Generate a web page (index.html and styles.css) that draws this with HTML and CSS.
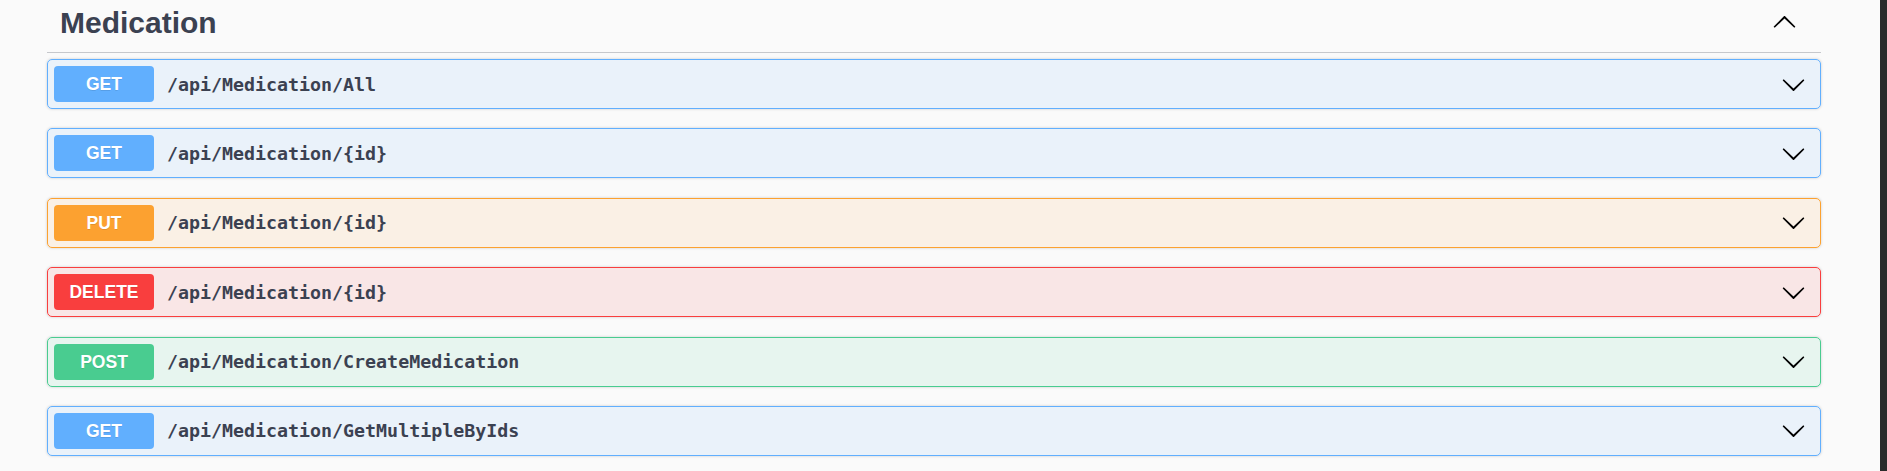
FILE: index.html
```html
<!DOCTYPE html>
<html>
<head>
<meta charset="utf-8">
<link rel="stylesheet" href="styles.css">
</head>
<body>
<div class="page">
  <main class="main">
    <section class="tag-section">
      <h3 class="tag-heading">
        <span class="tag-name">Medication</span>
        <svg class="arrow arrow-up" viewBox="0 0 20 20" width="25" height="25"><path d="M17.418 13.891c.272.268.709.268.979 0s.271-.701 0-.969l-7.908-7.83c-.27-.268-.707-.268-.979 0l-7.908 7.830c-.27.268-.27.701 0 .969.271.268.709.268.979 0L10 6.75l7.418 7.141z"/></svg>
      </h3>
      <div class="ops">
        <div class="opblock get">
          <span class="method">GET</span>
          <span class="path">/api/Medication/All</span>
          <svg class="arrow" viewBox="0 0 20 20" width="25" height="25"><path d="M17.418 6.109c.272-.268.709-.268.979 0s.271.701 0 .969l-7.908 7.83c-.27.268-.707.268-.979 0l-7.908-7.83c-.27-.268-.27-.701 0-.969.271-.268.709-.268.979 0L10 13.25l7.418-7.141z"/></svg>
        </div>
        <div class="opblock get">
          <span class="method">GET</span>
          <span class="path">/api/Medication/{id}</span>
          <svg class="arrow" viewBox="0 0 20 20" width="25" height="25"><path d="M17.418 6.109c.272-.268.709-.268.979 0s.271.701 0 .969l-7.908 7.83c-.27.268-.707.268-.979 0l-7.908-7.83c-.27-.268-.27-.701 0-.969.271-.268.709-.268.979 0L10 13.25l7.418-7.141z"/></svg>
        </div>
        <div class="opblock put">
          <span class="method">PUT</span>
          <span class="path">/api/Medication/{id}</span>
          <svg class="arrow" viewBox="0 0 20 20" width="25" height="25"><path d="M17.418 6.109c.272-.268.709-.268.979 0s.271.701 0 .969l-7.908 7.83c-.27.268-.707.268-.979 0l-7.908-7.83c-.27-.268-.27-.701 0-.969.271-.268.709-.268.979 0L10 13.25l7.418-7.141z"/></svg>
        </div>
        <div class="opblock delete">
          <span class="method">DELETE</span>
          <span class="path">/api/Medication/{id}</span>
          <svg class="arrow" viewBox="0 0 20 20" width="25" height="25"><path d="M17.418 6.109c.272-.268.709-.268.979 0s.271.701 0 .969l-7.908 7.83c-.27.268-.707.268-.979 0l-7.908-7.83c-.27-.268-.27-.701 0-.969.271-.268.709-.268.979 0L10 13.25l7.418-7.141z"/></svg>
        </div>
        <div class="opblock post">
          <span class="method">POST</span>
          <span class="path">/api/Medication/CreateMedication</span>
          <svg class="arrow" viewBox="0 0 20 20" width="25" height="25"><path d="M17.418 6.109c.272-.268.709-.268.979 0s.271.701 0 .969l-7.908 7.83c-.27.268-.707.268-.979 0l-7.908-7.83c-.27-.268-.27-.701 0-.969.271-.268.709-.268.979 0L10 13.25l7.418-7.141z"/></svg>
        </div>
        <div class="opblock get">
          <span class="method">GET</span>
          <span class="path">/api/Medication/GetMultipleByIds</span>
          <svg class="arrow" viewBox="0 0 20 20" width="25" height="25"><path d="M17.418 6.109c.272-.268.709-.268.979 0s.271.701 0 .969l-7.908 7.83c-.27.268-.707.268-.979 0l-7.908-7.83c-.27-.268-.27-.701 0-.969.271-.268.709-.268.979 0L10 13.25l7.418-7.141z"/></svg>
        </div>
      </div>
    </section>
  </main>
  <div class="scrollbar"></div>
</div>
</body>
</html>
```

FILE: styles.css
```css
html, body {
  margin: 0;
  padding: 0;
  height: 100%;
  overflow: hidden;
}

body {
  font-family: "Liberation Sans", Arial, sans-serif;
  background: #fafafa;
  color: #3b4151;
}

.page {
  display: flex;
  height: 471px;
}

.main {
  flex: 0 0 1880px;
  background: #fafafa;
  box-sizing: border-box;
  padding: 0 59px 0 47px;
}

.scrollbar {
  flex: 1;
  background: #2b2b2b;
}

.tag-heading {
  margin: 0 0 6px 0;
  padding: 5px 24px 12px 13px;
  border-bottom: 1px solid #c6c8cc;
  display: flex;
  align-items: center;
  justify-content: space-between;
  font-size: 30px;
  line-height: 35px;
  font-weight: 700;
  color: #3b4151;
}

.tag-name {
  display: block;
}

.arrow {
  display: block;
  fill: #000;
  flex: 0 0 auto;
}

.arrow-up {
  margin-top: -1px;
}

.ops {
  display: flex;
  flex-direction: column;
  gap: 19.4px;
}

.opblock {
  display: flex;
  align-items: center;
  height: 50px;
  box-sizing: border-box;
  padding: 0 14px 0 6px;
  border: 1px solid;
  border-radius: 5px;
  box-shadow: 0 0 3px rgba(0, 0, 0, 0.19);
}

.method {
  flex: 0 0 100px;
  height: 36px;
  line-height: 36px;
  border-radius: 4px;
  text-align: center;
  color: #fff;
  font-family: "Liberation Sans", Arial, sans-serif;
  font-weight: 700;
  font-size: 17.5px;
  text-shadow: 0 1px 0 rgba(0, 0, 0, 0.1);
}

.path {
  flex: 1;
  padding-left: 13px;
  font-family: "DejaVu Sans Mono", "Liberation Mono", monospace;
  font-weight: 700;
  font-size: 18.3px;
  color: #3b4151;
}

.get {
  background: rgba(97, 175, 254, 0.1);
  border-color: #61affe;
}
.get .method { background: #61affe; }

.put {
  background: rgba(252, 161, 48, 0.1);
  border-color: #fca130;
}
.put .method { background: #fca130; }

.delete {
  background: rgba(249, 62, 62, 0.1);
  border-color: #f93e3e;
}
.delete .method { background: #f93e3e; }

.post {
  background: rgba(73, 204, 144, 0.1);
  border-color: #49cc90;
}
.post .method { background: #49cc90; }
```
